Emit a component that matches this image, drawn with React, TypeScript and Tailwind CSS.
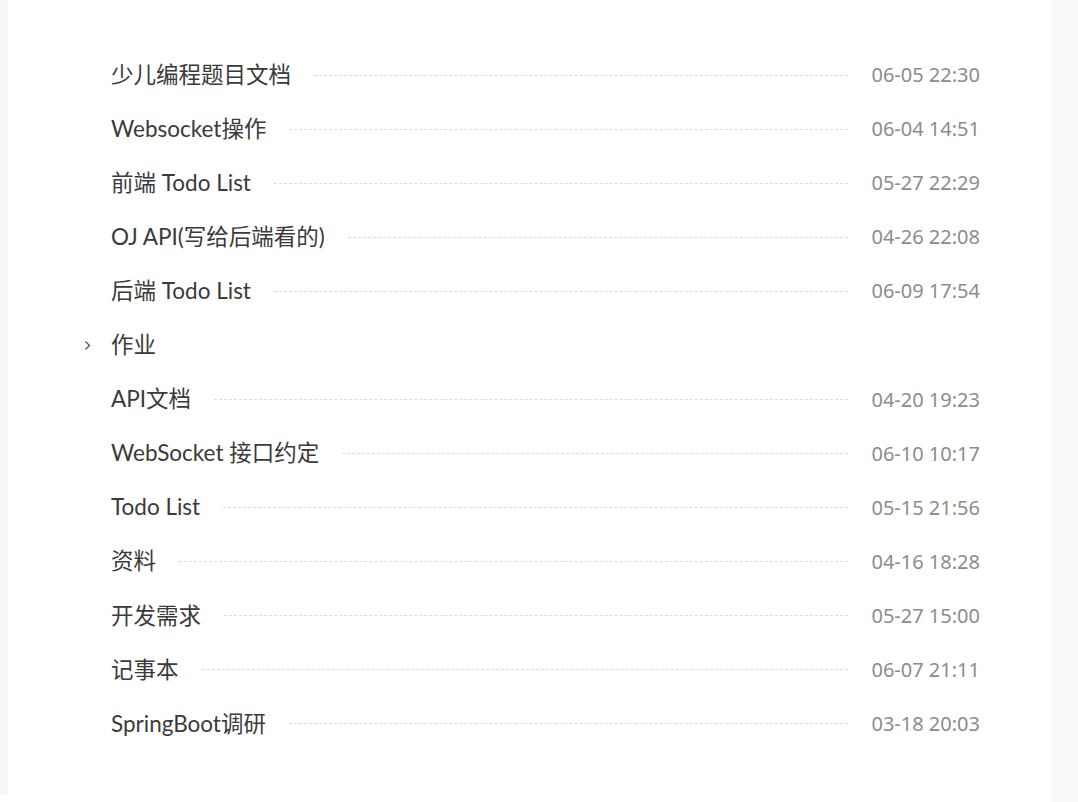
import React from "react";

type Doc = { title: string; time?: string; folder?: boolean };

const docs: Doc[] = [
	{ title: "少儿编程题目文档", time: "06-05 22:30" },
	{ title: "Websocket操作", time: "06-04 14:51" },
	{ title: "前端 Todo List", time: "05-27 22:29" },
	{ title: "OJ API(写给后端看的)", time: "04-26 22:08" },
	{ title: "后端 Todo List", time: "06-09 17:54" },
	{ title: "作业", folder: true },
	{ title: "API文档", time: "04-20 19:23" },
	{ title: "WebSocket 接口约定", time: "06-10 10:17" },
	{ title: "Todo List", time: "05-15 21:56" },
	{ title: "资料", time: "04-16 18:28" },
	{ title: "开发需求", time: "05-27 15:00" },
	{ title: "记事本", time: "06-07 21:11" },
	{ title: "SpringBoot调研", time: "03-18 20:03" },
];

const Chevron: React.FC = () => (
	<svg width="9" height="13" viewBox="0 0 9 13" fill="none" stroke="#555" strokeWidth="1.3">
		<path d="M2.5 2.5 L6.5 6.5 L2.5 10.5" />
	</svg>
);

const DocRow: React.FC<{ doc: Doc }> = ({ doc }) => (
	<div className="flex items-center h-[54.08px]">
		<div className="w-[30px] flex items-center justify-start pl-[2px]">{doc.folder && <Chevron />}</div>
		<span
			className="text-[22.5px] text-[#3a3a3a] whitespace-nowrap leading-none"
			style={{ fontFamily: 'Lato, "Noto Sans CJK SC", sans-serif' }}
		>
			{doc.title}
		</span>
		{doc.time && (
			<>
				<div className="flex-1 ml-[23px] mr-[23px] border-t border-dashed border-[#dcdcdc]" />
				<span className="text-[20px] text-[#8c8c8c] whitespace-nowrap leading-none">{doc.time}</span>
			</>
		)}
	</div>
);

export default function App() {
	return (
		<div
			className="flex w-[1078px] h-[802px] bg-white overflow-hidden"
			style={{ fontFamily: '"Noto Sans", "Noto Sans CJK SC", sans-serif' }}
		>
			<div className="w-[8px] h-[795px] bg-[#f8f8f8]" />
			<div className="flex-1 pt-[48px] pl-[73px] pr-[72px]">
				{docs.map((d, i) => (
					<DocRow key={i} doc={d} />
				))}
			</div>
			<div className="w-[26px] h-full bg-[#fafafa]" />
		</div>
	);
}
